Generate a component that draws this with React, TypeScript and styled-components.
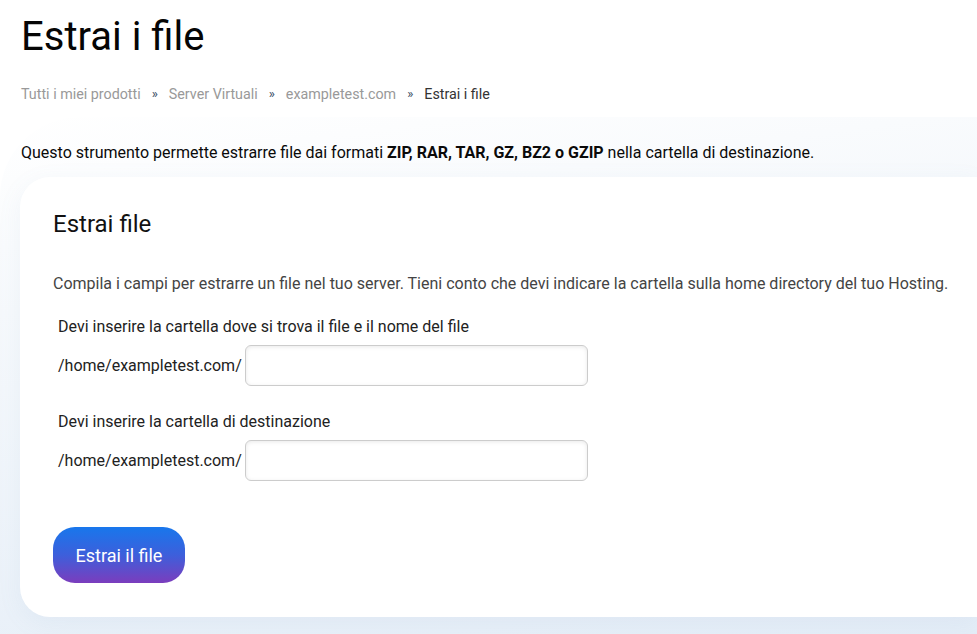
import React from "react";
import styled, { createGlobalStyle } from "styled-components";

const Global = createGlobalStyle`
  html, body { margin: 0; padding: 0; background: #fff; }
  body { font-family: Roboto, "Noto Sans", Arial, sans-serif; color: #111; overflow: hidden; }
  * { box-sizing: border-box; }
`;

const Page = styled.div`
  width: 977px;
  height: 634px;
  display: flex;
  flex-direction: column;
  overflow: hidden;
`;

const Header = styled.header`
  padding: 13px 0 0 21px;
`;

const Title = styled.h1`
  margin: 0;
  font-size: 40px;
  line-height: 48px;
  font-weight: 400;
  color: #050505;
`;

const Crumbs = styled.nav`
  display: flex;
  align-items: center;
  margin-top: 23px;
  font-size: 14.3px;
  line-height: 20px;
`;

const Crumb = styled.span<{ $current?: boolean }>`
  color: ${(p) => (p.$current ? "#333" : "#999")};
`;

const Sep = styled.span`
  color: #34495e;
  margin: 0 11px 0 11px;
  font-size: 13px;
`;

const Section = styled.section`
  flex: 1;
  margin-top: 13px;
  padding: 24px 0 0 20px;
  border-top-left-radius: 80px;
  background: linear-gradient(172deg, #ffffff 0%, #f6f9fc 30%, #e4edf7 100%);
`;

const Intro = styled.p`
  margin: 0 0 12px 1px;
  font-size: 16px;
  line-height: 24px;
  color: #0a0a0a;
  b { font-weight: 700; }
`;

const Card = styled.div`
  background: #fff;
  border-radius: 30px 0 0 30px;
  padding: 33px 0 34px 33px;
  box-shadow: 0 6px 24px rgba(120, 150, 190, 0.08);
`;

const CardTitle = styled.h2`
  margin: 0;
  font-size: 24px;
  line-height: 29px;
  font-weight: 400;
  color: #111;
`;

const Lead = styled.p`
  margin: 33px 0 19px;
  font-size: 16px;
  line-height: 24px;
  color: #444;
  white-space: nowrap;
`;

const Group = styled.div<{ $gap?: number }>`
  padding: 0 5px;
  margin-top: ${(p) => p.$gap ?? 0}px;
`;

const Label = styled.label`
  display: block;
  font-size: 16px;
  line-height: 24px;
  color: #222;
  margin-bottom: 6px;
`;

const Row = styled.div`
  display: flex;
  align-items: center;
  gap: 3px;
`;

const Prefix = styled.span`
  font-size: 16px;
  line-height: 24px;
  color: #222;
`;

const Input = styled.input`
  width: 343px;
  height: 41px;
  border: 1px solid #ccc;
  border-radius: 6px;
  box-shadow: inset 0 1px 4px rgba(0, 0, 0, 0.09);
  font: inherit;
  padding: 0 10px;
  outline: none;
`;

const Button = styled.button`
  margin-top: 46px;
  height: 56px;
  padding: 0 22.5px;
  border: none;
  border-radius: 22px;
  background: linear-gradient(180deg, #1877ec 0%, #3d5fdb 50%, #7b3dbd 100%);
  color: #fff;
  font-family: Roboto, Arial, sans-serif;
  font-size: 18px;
  cursor: pointer;
`;

export default function App() {
  return (
    <Page>
      <Global />
      <Header>
        <Title>Estrai i file</Title>
        <Crumbs>
          <Crumb>Tutti i miei prodotti</Crumb>
          <Sep>»</Sep>
          <Crumb>Server Virtuali</Crumb>
          <Sep>»</Sep>
          <Crumb>exampletest.com</Crumb>
          <Sep>»</Sep>
          <Crumb $current>Estrai i file</Crumb>
        </Crumbs>
      </Header>
      <Section>
        <Intro>
          Questo strumento permette estrarre file dai formati <b>ZIP, RAR, TAR, GZ, BZ2 o GZIP</b> nella cartella di destinazione.
        </Intro>
        <Card>
          <CardTitle>Estrai file</CardTitle>
          <Lead>
            Compila i campi per estrarre un file nel tuo server. Tieni conto che devi indicare la cartella sulla home directory del tuo Hosting.
          </Lead>
          <Group>
            <Label>Devi inserire la cartella dove si trova il file e il nome del file</Label>
            <Row>
              <Prefix>/home/exampletest.com/</Prefix>
              <Input type="text" />
            </Row>
          </Group>
          <Group $gap={24}>
            <Label>Devi inserire la cartella di destinazione</Label>
            <Row>
              <Prefix>/home/exampletest.com/</Prefix>
              <Input type="text" />
            </Row>
          </Group>
          <Button>Estrai il file</Button>
        </Card>
      </Section>
    </Page>
  );
}
